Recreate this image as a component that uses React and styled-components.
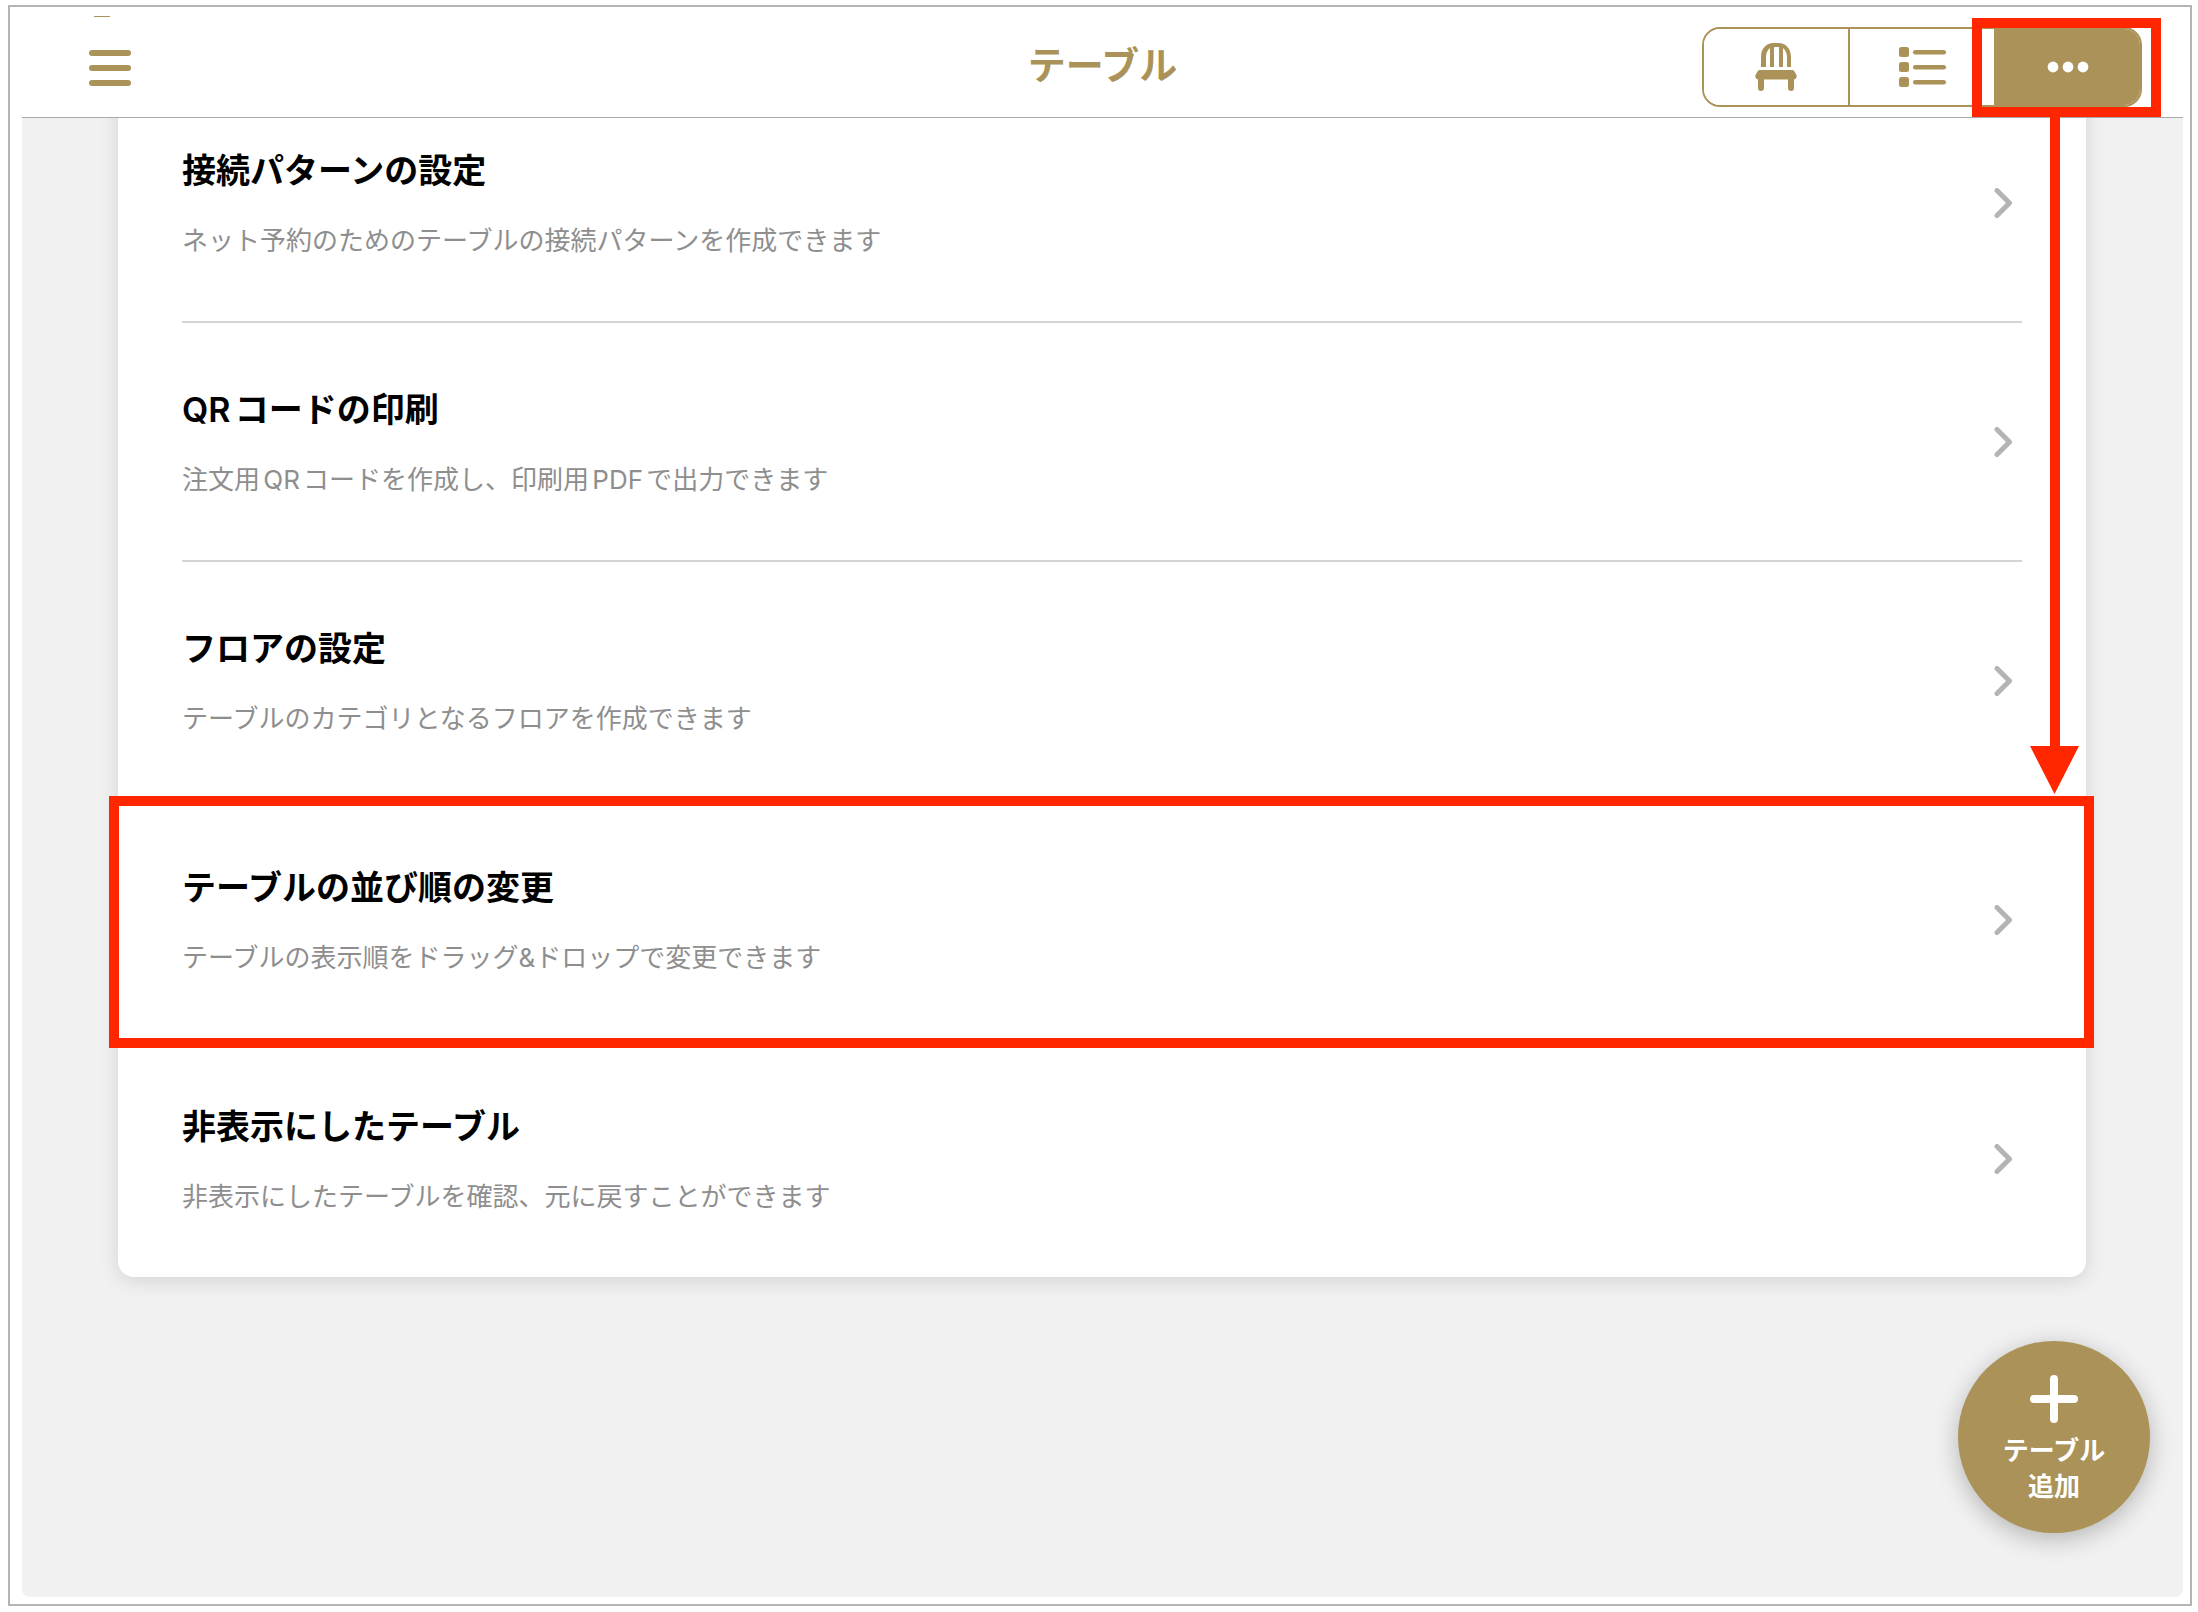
import React from "react";
import styled, { createGlobalStyle, css } from "styled-components";

const gold = "#ab9259";
const red = "#ff2600";

const GlobalStyle = createGlobalStyle`
  * {
    box-sizing: border-box;
  }

  body {
    margin: 0;
    background-color: #fff;
    font-family: Inter, "Noto Sans CJK JP", sans-serif;
    text-autospace: normal;
  }

  button {
    font-family: inherit;
    cursor: pointer;
  }
`;

const Page = styled.div`
  display: flex;
  min-height: 100vh;
  padding: 5px 6px 6px 8px;
`;

const Frame = styled.div`
  flex: 1;
  display: flex;
  flex-direction: column;
  padding: 0 7px 7px 12px;
  border: 2px solid #b4b4b4;
`;

const Header = styled.header`
  position: relative;
  z-index: 2;
  display: grid;
  grid-template-columns: 1fr auto 1fr;
  align-items: center;
  height: 111px;
  padding-top: 10px;
  border-bottom: 1px solid #a9a9a9;
`;

const MenuButton = styled.button`
  position: relative;
  justify-self: start;
  display: flex;
  margin-left: 67px;
  padding: 2px 0 0;
  border: none;
  background: none;

  &::before {
    content: "";
    position: absolute;
    top: -32px;
    left: 5px;
    width: 16px;
    height: 1px;
    background-color: ${gold};
  }
`;

const Title = styled.h1`
  margin: 0;
  padding-bottom: 4px;
  color: ${gold};
  font-size: 38px;
  line-height: 52px;
  font-weight: 600;
`;

const Views = styled.div`
  position: relative;
  justify-self: end;
  margin-right: 41px;
`;

const Segments = styled.div`
  display: grid;
  grid-template-columns: 146px 144px 146px;
  height: 80px;
  border: 2px solid ${gold};
  border-radius: 18px;
  overflow: hidden;
`;

const Segment = styled.button`
  display: flex;
  align-items: center;
  justify-content: center;
  padding: 0 0 0 ${(props) => (props.$divided ? "0" : "2px")};
  border: none;
  border-right: ${(props) => (props.$divided ? `2px solid ${gold}` : "none")};
  background-color: ${(props) => (props.$active ? gold : "#fff")};
`;

const Callout = styled.div`
  position: absolute;
  top: -9px;
  right: -19px;
  bottom: -10px;
  width: 189px;
  border: 10px solid ${red};
  pointer-events: none;
`;

const Arrow = styled.svg`
  position: absolute;
  top: 100%;
  right: 71px;
  margin-top: 10px;
`;

const Stage = styled.main`
  position: relative;
  flex: 1;
  padding: 0 97px 0 96px;
  background-color: #f1f1f1;
  border-radius: 0 0 8px 8px;
  overflow: hidden;
`;

/* the list is scrolled a little way under the header */
const Card = styled.ul`
  margin: -34px 0 0;
  padding: 0;
  list-style: none;
  background-color: #fff;
  border-radius: 16px;
  box-shadow: 0 4px 20px rgba(0, 0, 0, 0.12);
`;

const Item = styled.li`
  position: relative;
  padding: 0 64px;

  ${(props) =>
    props.$marked &&
    css`
      &::after {
        content: "";
        position: absolute;
        top: -5px;
        right: -8px;
        bottom: -8px;
        left: -9px;
        z-index: 1;
        border: 10px solid ${red};
        pointer-events: none;
      }
    `}
`;

const ItemButton = styled.button`
  display: flex;
  align-items: center;
  justify-content: space-between;
  width: 100%;
  height: ${(props) => (props.$last ? "237px" : "239px")};
  padding: 0 10px 0 0;
  border: none;
  border-bottom: ${(props) => (props.$last ? "none" : "2px solid #d4d4d4")};
  background: none;
  text-align: left;
`;

const ItemText = styled.span`
  display: flex;
  flex-direction: column;
  gap: 26px;
  padding-bottom: 2px;
`;

const ItemTitle = styled.span`
  color: #000;
  font-size: 34px;
  line-height: 52px;
  font-weight: 600;
`;

const ItemNote = styled.span`
  color: #8e8e8e;
  font-size: 26px;
  line-height: 36px;
`;

const AddButton = styled.button`
  position: absolute;
  right: 33px;
  bottom: 64px;
  display: flex;
  flex-direction: column;
  align-items: center;
  gap: 10px;
  width: 192px;
  height: 192px;
  padding: 34px 0 0;
  border: none;
  border-radius: 50%;
  background-color: ${gold};
  box-shadow: 0 6px 24px rgba(0, 0, 0, 0.25);
  color: #fff;
`;

const AddLabel = styled.span`
  font-size: 26px;
  line-height: 36px;
  font-weight: 600;
`;

const MenuIcon = () => (
  <svg width="42" height="36" viewBox="0 0 42 36" fill={gold}>
    <rect width="42" height="6" rx="3" />
    <rect y="15" width="42" height="6" rx="3" />
    <rect y="30" width="42" height="6" rx="3" />
  </svg>
);

const ChairIcon = () => (
  <svg width="42" height="48" viewBox="0 0 42 48" fill={gold}>
    <path d="M6 24V14C6 5 12 0 18 0h6c6 0 12 5 12 14v10h-4V14c0-4-1.500-7-4-9v19h-4V4h-5v20h-4V5c-2.500 2-4 5-4 9v10z" />
    <path d="M5 27h32c1 0 2 .5 2.500 1.500L41.500 32c.8 2-.5 4.500-3 4.500h-35c-2.500 0-3.800-2.500-3-4.500l2-3.500C3 27.500 4 27 5 27z" />
    <path d="M3 35h6v10a3 3 0 0 1-6 0zM33 35h6v10a3 3 0 0 1-6 0z" />
  </svg>
);

const ListIcon = () => (
  <svg width="48" height="40" viewBox="0 0 48 40" fill={gold}>
    {[0, 15, 30].map((y) => (
      <g key={y}>
        <rect y={y} width="10" height="10" rx="2.500" />
        <rect x="14" y={y + 3} width="33" height="4.500" rx="2.250" />
      </g>
    ))}
  </svg>
);

const MoreIcon = () => (
  <svg width="42" height="12" viewBox="0 0 42 12" fill="#fff">
    <circle cx="6" cy="6" r="5.400" />
    <circle cx="21" cy="6" r="5.400" />
    <circle cx="36" cy="6" r="5.400" />
  </svg>
);

const ChevronIcon = () => (
  <svg
    width="18"
    height="30"
    viewBox="0 0 18 30"
    fill="none"
    stroke="#b4b4b4"
    strokeWidth="5"
    strokeLinecap="round"
    strokeLinejoin="round"
  >
    <path d="M3 2.500L15.500 15L3 27.500" />
  </svg>
);

const PlusIcon = () => (
  <svg
    width="48"
    height="48"
    viewBox="0 0 48 48"
    stroke="#fff"
    strokeWidth="8"
    strokeLinecap="round"
  >
    <path d="M24 4V44M4 24H44" />
  </svg>
);

const items = [
  {
    title: "接続パターンの設定",
    note: "ネット予約のためのテーブルの接続パターンを作成できます",
  },
  {
    title: "QRコードの印刷",
    note: "注文用QRコードを作成し、印刷用PDFで出力できます",
  },
  {
    title: "フロアの設定",
    note: "テーブルのカテゴリとなるフロアを作成できます",
  },
  {
    title: "テーブルの並び順の変更",
    note: "テーブルの表示順をドラッグ&ドロップで変更できます",
    marked: true,
  },
  {
    title: "非表示にしたテーブル",
    note: "非表示にしたテーブルを確認、元に戻すことができます",
  },
];

const App = () => {
  return (
    <Page>
      <GlobalStyle />
      <Frame>
        <Header>
          <MenuButton aria-label="メニュー">
            <MenuIcon />
          </MenuButton>
          <Title>テーブル</Title>
          <Views>
            <Segments>
              <Segment $divided aria-label="座席">
                <ChairIcon />
              </Segment>
              <Segment aria-label="一覧">
                <ListIcon />
              </Segment>
              <Segment $active aria-label="その他">
                <MoreIcon />
              </Segment>
            </Segments>
            <Callout>
              <Arrow width="50" height="677" viewBox="0 0 50 677" fill={red}>
                <rect x="20" width="10" height="630" />
                <path d="M0 629H49L24.500 677z" />
              </Arrow>
            </Callout>
          </Views>
        </Header>

        <Stage>
          <Card>
            {items.map((item, i) => (
              <Item key={item.title} $marked={item.marked}>
                <ItemButton $last={i === items.length - 1}>
                  <ItemText>
                    <ItemTitle>{item.title}</ItemTitle>
                    <ItemNote>{item.note}</ItemNote>
                  </ItemText>
                  <ChevronIcon />
                </ItemButton>
              </Item>
            ))}
          </Card>

          <AddButton>
            <PlusIcon />
            <AddLabel>
              テーブル
              <br />
              追加
            </AddLabel>
          </AddButton>
        </Stage>
      </Frame>
    </Page>
  );
};

export default App;
